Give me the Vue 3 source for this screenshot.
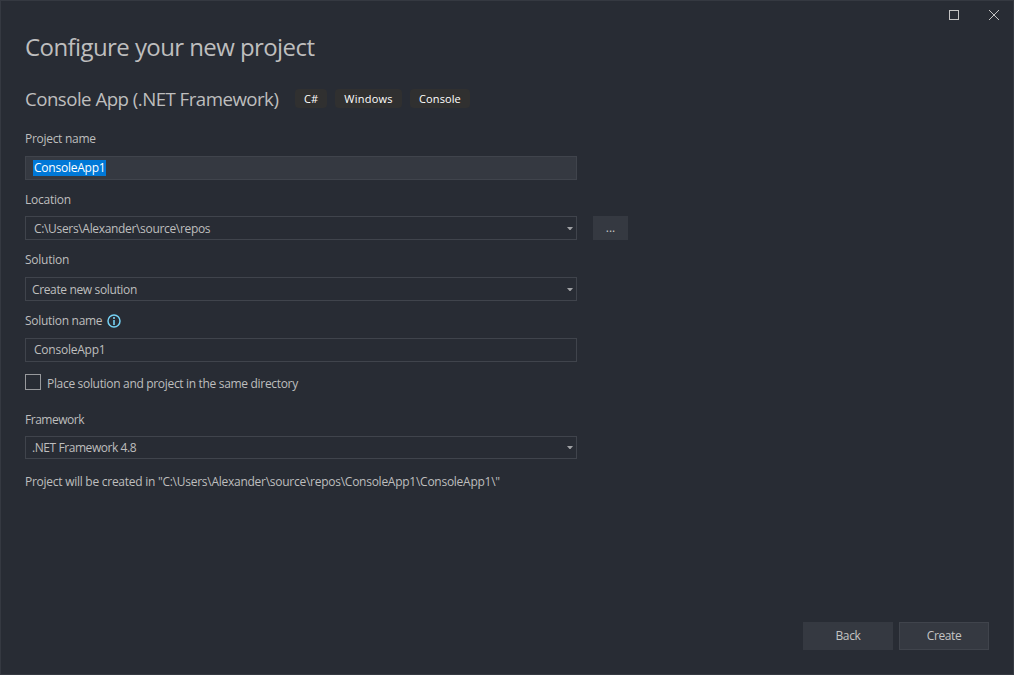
<script setup>
const tags = [
  { name: 'C#', cls: 'tag-cs' },
  { name: 'Windows', cls: 'tag-win' },
  { name: 'Console', cls: 'tag-con' },
]
</script>

<template>
  <main class="window">
    <header class="titlebar">
      <svg class="maximize" width="10" height="10" viewBox="0 0 10 10"><rect x=".5" y=".5" width="9" height="9" /></svg>
      <svg class="close" width="10" height="10" viewBox="0 0 10 10"><path d="M0 0L10 10M10 0L0 10" /></svg>
    </header>

    <h1><span class="t-title">Configure your new project</span></h1>
    <div class="template">
      <h2><span class="t-sub">Console App (.NET Framework)</span></h2>
      <span v-for="tag in tags" :key="tag.name" class="tag" :class="tag.cls">{{ tag.name }}</span>
    </div>

    <form class="form" @submit.prevent>
      <div class="label l1"><span class="t-a">Project name</span></div>
      <div class="field focused"><span class="selection t-app">ConsoleApp1</span></div>

      <div class="label l2"><span class="t-b">Location</span></div>
      <div class="row">
        <div class="field text">
          <span class="t-c">C:\Users\Alexander\source\repos</span>
          <svg class="arrow" width="6" height="3" viewBox="0 0 6 3"><path d="M0 0H6L3.5 3H2.5Z" /></svg>
        </div>
        <button class="browse">...</button>
      </div>

      <div class="label l3"><span class="t-d">Solution</span></div>
      <div class="field">
        <span class="t-e">Create new solution</span>
        <svg class="arrow" width="6" height="3" viewBox="0 0 6 3"><path d="M0 0H6L3.5 3H2.5Z" /></svg>
      </div>

      <div class="label l4">
        <span class="t-f">Solution name</span>
        <svg class="info" width="14" height="14" viewBox="0 0 14 14">
          <circle cx="7" cy="7" r="6" />
          <path d="M6 3H8V5H6ZM6 6H8V11H6Z" />
        </svg>
      </div>
      <div class="field text"><span class="t-app">ConsoleApp1</span></div>

      <div class="check">
        <span class="box"></span>
        <span class="t-g">Place solution and project in the same directory</span>
      </div>

      <div class="label l5"><span class="t-h">Framework</span></div>
      <div class="field short">
        <span class="t-i">.NET Framework 4.8</span>
        <svg class="arrow" width="6" height="3" viewBox="0 0 6 3"><path d="M0 0H6L3.5 3H2.5Z" /></svg>
      </div>

      <p class="note"><span class="t-j">Project will be created in "C:\Users\Alexander\source\repos\ConsoleApp1\ConsoleApp1\"</span></p>
    </form>

    <footer class="actions">
      <button><span class="t-k">Back</span></button>
      <button class="primary"><span class="t-l">Create</span></button>
    </footer>
  </main>
</template>

<style>
body { margin: 0; background: #282c34; }
</style>

<style scoped>
* { box-sizing: border-box; }
.window {
  width: 1014px;
  height: 675px;
  padding: 0 24px;
  border: 1px solid #353941;
  background: #282c34;
  color: #bebebe;
  font: 12px/16px "Open Sans", "Noto Sans", sans-serif;
  display: flex;
  flex-direction: column;
  white-space: nowrap;
  overflow: hidden;
}
.titlebar {
  height: 28px;
  flex: none;
  display: flex;
  justify-content: flex-end;
  align-items: center;
  gap: 30px;
  margin-right: -10px;
}
.titlebar svg { fill: none; stroke: #c4c4c4; stroke-width: 1; }
h1, h2, p { margin: 0; font-weight: 400; }
h1 { height: 36px; font-size: 24px; line-height: 36px; }
.template { display: flex; align-items: center; height: 28px; margin-top: 20px; }
h2 { width: 270px; font-size: 18.67px; line-height: 28px; }
.t-title { letter-spacing: -.58px; }
.t-sub { letter-spacing: -.52px; }
.t-a, .t-f { letter-spacing: -.29px; }
.t-b, .t-d { letter-spacing: -.25px; }
.t-c { letter-spacing: -.33px; }
.t-e { letter-spacing: -.36px; }
.t-app { letter-spacing: -.23px; }
.t-g { letter-spacing: -.32px; }
.t-h { letter-spacing: -.48px; }
.t-i { letter-spacing: -.43px; }
.t-j { letter-spacing: -.262px; }
.t-k { letter-spacing: -.35px; }
.t-l { letter-spacing: -.4px; }
.tag {
  height: 19px;
  margin: -1px 8px 0 0;
  border-radius: 4px;
  background: #303030;
  color: #fff;
  font-size: 11px;
  line-height: 19px;
  text-align: center;
}
.tag-cs { width: 32px; }
.tag-win { width: 67px; letter-spacing: .25px; }
.tag-con { width: 60px; letter-spacing: .1px; }
.form { display: flex; flex-direction: column; width: 552px; }
.label { display: flex; align-items: center; height: 16px; }
.l1 { margin: 18px 0 9px; }
.l2 { margin: 12px 0 8px; }
.l3 { margin: 12px 0 9px; }
.l4 { margin: 12px 0 9px; }
.l4 .t-f { width: 77px; }
.l5 { margin: 22px 0 8px; }
.field {
  width: 552px;
  height: 24px;
  flex: none;
  border: 1px solid #40444c;
  padding: 0 3px 0 6px;
  display: flex;
  align-items: center;
  justify-content: space-between;
}
.field.text { padding-left: 8px; }
.field.short { height: 23px; }
.field.focused { background: #353941; padding-left: 7px; }
.t-c, .t-e { padding-top: 2px; }
.selection { height: 16px; width: 73px; padding-left: 1px; background: #0078d7; color: #fff; }
.arrow { fill: #a0a2a5; }
.row { display: flex; gap: 16px; }
.info { margin-left: 5px; }
.info circle { fill: none; stroke: #75d1f3; stroke-width: 1.5; }
.info path { fill: #75d1f3; opacity: .8; }
button {
  padding: 0;
  border: 0;
  background: #353941;
  color: #c4c4c4;
  font: inherit;
}
.browse { width: 35px; height: 24px; flex: none; }
.check { display: flex; align-items: center; gap: 6px; height: 16px; margin-top: 12px; }
.check .t-g { padding-top: 3px; }
.box { width: 16px; height: 16px; border: 1px solid #98999c; }
.note { margin-top: 15px; }
.actions { display: flex; justify-content: flex-end; gap: 6px; margin: auto 0 24px; }
.actions button { width: 90px; height: 28px; }
.actions .primary { border: 1px solid #40444c; }
</style>
